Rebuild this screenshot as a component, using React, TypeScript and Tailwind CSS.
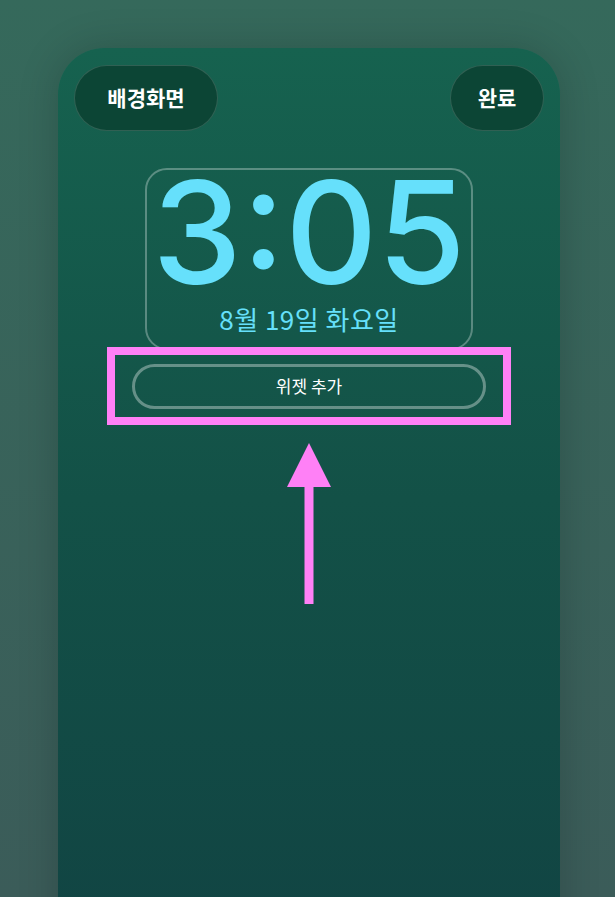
import React from 'react';

const kr = { fontFamily: '"Noto Sans CJK KR", "Noto Sans", sans-serif' };

export default function App() {
  return (
    <div className="h-[897px] w-full overflow-hidden bg-gradient-to-b from-[#35695b] to-[#3b5c59] pt-[48px]">
      <div
        className="ml-[58px] flex h-[900px] w-[502px] flex-col items-center rounded-t-[46px] bg-gradient-to-b from-[#16624f] via-[#135147] to-[#114443] shadow-[0_0_40px_rgba(0,0,0,0.18)]"
        style={kr}
      >
        {/* top bar */}
        <div className="flex w-full items-center justify-between px-4 pt-[17px]">
          <button className="flex h-[66px] w-[144px] items-center justify-center rounded-full border border-white/15 bg-[#0c4535] text-[21px] font-bold text-white">
            배경화면
          </button>
          <button className="flex h-[66px] w-[94px] items-center justify-center rounded-full border border-white/15 bg-[#0c4535] text-[21px] font-bold text-white">
            완료
          </button>
        </div>

        {/* clock */}
        <div className="mt-[37px] flex h-[182px] w-[328px] flex-col items-center rounded-[22px] border-2 border-white/30">
          <div
            className="mt-[2px] text-[143px] font-medium leading-[120px] tracking-[0px] text-[#66e0fb]"
            style={{ fontFamily: 'Inter, "Noto Sans", sans-serif' }}
          >
            3:05
          </div>
          <div className="mt-[14px] text-[26px] leading-none tracking-[0.5px] text-[#66e0fb]">8월 19일 화요일</div>
        </div>

        {/* highlighted widget button */}
        <div className="mt-[-3px] flex h-[78px] w-[404px] items-center justify-center border-[8px] border-[#ff80f6]">
          <div className="flex h-[45px] w-[354px] items-center justify-center rounded-full border-[3px] border-white/35 text-[17px] text-white">
            위젯 추가
          </div>
        </div>

        {/* arrow */}
        <svg className="mt-[18px]" width="46" height="161" viewBox="0 0 46 161">
          <polygon points="23,0 45,44 1,44" fill="#ff80f6" />
          <rect x="18.5" y="43" width="9" height="118" fill="#ff80f6" />
        </svg>
      </div>
    </div>
  );
}
